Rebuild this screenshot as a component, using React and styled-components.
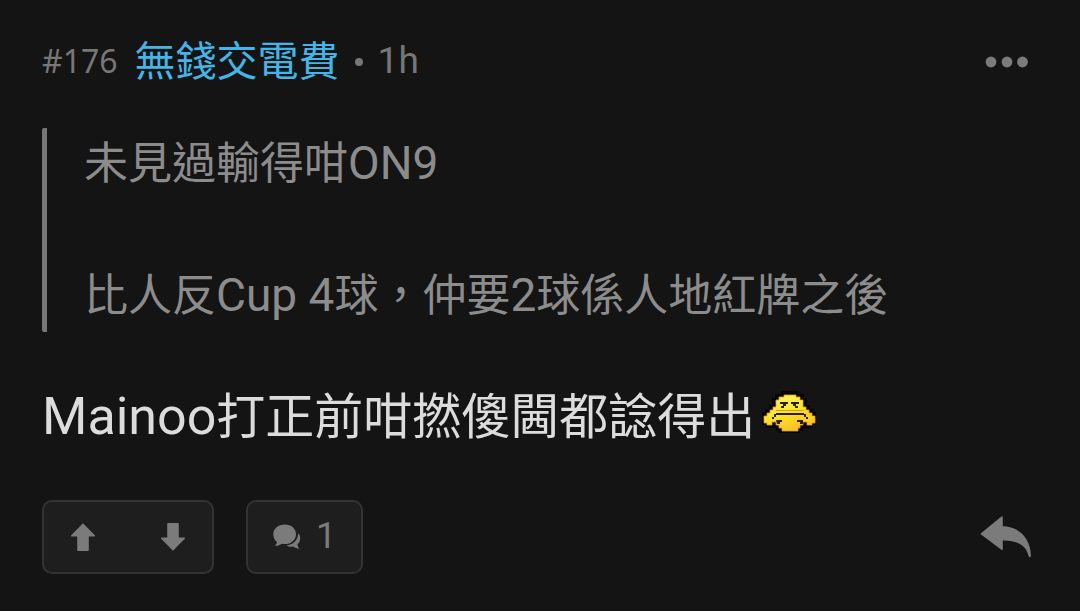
import styled, { createGlobalStyle } from "styled-components";

const App = () => {
  return (
    <>
      <GlobalStyle />
      <Post>
        <Header>
          <Floor>#176</Floor>
          <Author href="#author">無錢交電費</Author>
          <Dot />
          <Time>1h</Time>
          <MoreButton type="button" aria-label="More">
            <MoreIcon />
          </MoreButton>
        </Header>
        <Quote>
          <p>
            未見過輸得咁<QuoteLatin>ON9</QuoteLatin>
          </p>
          <p>
            <br />
          </p>
          <p>
            比人反<QuoteLatin>Cup 4</QuoteLatin>球，仲要<QuoteLatin>2</QuoteLatin>
            球係人地紅牌之後
          </p>
        </Quote>
        <Content>
          <ContentLatin>Mainoo</ContentLatin>打正前咁撚傻閪都諗得出
          <SadFace />
        </Content>
        <Footer>
          <VoteBox>
            <VoteButton type="button" aria-label="Upvote">
              <ArrowIcon />
            </VoteButton>
            <VoteButton type="button" aria-label="Downvote">
              <ArrowIcon $down />
            </VoteButton>
          </VoteBox>
          <CommentButton type="button" aria-label="1 comment">
            <CommentsIcon />
            <span>1</span>
          </CommentButton>
          <ReplyButton type="button" aria-label="Reply">
            <ReplyIcon />
          </ReplyButton>
        </Footer>
      </Post>
    </>
  );
};

export default App;

const MoreIcon = () => (
  <svg width="44" height="12" viewBox="0 0 44 12" fill="currentColor">
    <circle cx="6" cy="6" r="5.4" />
    <circle cx="22" cy="6" r="5.4" />
    <circle cx="37.5" cy="6" r="5.4" />
  </svg>
);

const ArrowIcon = ({ $down }) => (
  <ArrowSvg $down={$down} width="26" height="28" viewBox="0 0 26 28">
    <path
      d="M13 .2 24.8 12.200Q25.600 13.400 24.200 13.400H18.800V27.200Q18.800 28 18 28H8Q7.200 28 7.200 27.200V13.400H1.800Q.4 13.400 1.200 12.200Z"
      fill="currentColor"
    />
  </ArrowSvg>
);

const CommentsIcon = () => (
  <svg width="28" height="26" viewBox="0 0 28 26" fill="currentColor">
    <path d="M11.800.5C18.200.5 23 4.600 23 10.200s-4.800 9.900-11.200 9.900c-1.100 0-2.100-.1-3-.3C6.900 21.200 4.500 22 1.600 21.800c1.500-1.200 2.200-2.400 2.300-3.900C1.600 16.100.3 13.400.3 10.200.3 4.600 5.400.5 11.800.5Z" />
    <path d="M25.200 9.300c1.300 1.400 2 3.100 2 5 0 2.400-1 4.500-2.700 6 .1 1.800.8 3.200 2.200 4.400-2.500.1-4.600-.6-6.300-2.100-2.600.5-5.100.1-7-1.200 6.500-.4 11.700-5 11.800-12.100Z" />
  </svg>
);

const ReplyIcon = () => (
  <svg width="52" height="42" viewBox="0 0 52 42" fill="currentColor">
    <path d="M1 17.200 21.400.6Q22.800-.2 22.800 1.400V10.300C39 10.600 50.500 22 50.900 39.500Q51 41.500 49.400 41.200L48.500 40C46.500 29.500 37 24 22.800 24.500V33Q22.800 34.700 21.400 33.700L1 18.600Q.2 17.900 1 17.200Z" />
  </svg>
);

const SadFace = () => (
  <FaceSvg viewBox="0 0 54 44" role="img" aria-label="sad">
    <defs>
      <linearGradient id="skin" x1="0.35" y1="0" x2="0.75" y2="1">
        <stop offset="0" stopColor="#fff35c" />
        <stop offset="0.5" stopColor="#fde02a" />
        <stop offset="1" stopColor="#f6b92c" />
      </linearGradient>
    </defs>
    <path
      d="M19 2h18v3h5v4h3v7h3v4h3v3h3v13h-3v3H41v3h-3v2H17v-2h-3v-3H4v-3H0V23h3v-3h4v-4h3V9h3V5h6Z"
      fill="#060606"
    />
    <path
      d="M22 6h12v2h4v3h3v7h3v3h3v3h3v3h3v7h-3v2h-5v-3h-4v3h-3v3h-2v3H20v-3h-3v-3h-3v-3h-4v3H5v-2H2v-7h3v-3h3v-3h3v-3h3v-7h3V8h5Z"
      fill="url(#skin)"
      stroke="#e39a2c"
      strokeWidth="0.8"
    />
    <path
      d="M18 13h8v2h-2v2h-2v2h-3v-2h2v-2h-3ZM29 13h8v2h-3v2h2v2h-3v-2h-2v-2h-2ZM14 24h28v2H14ZM12 25h2v3h-2ZM42 25h2v3h-2ZM10 28h2v2h-2ZM44 28h2v2h-2ZM14 31h6v2h-2v2h-3ZM35 31h6v4h-3v-2h-3Z"
      fill="#2a2100"
    />
    <path d="M14 21h28v1H14Z" fill="#c9a21c" />
  </FaceSvg>
);

// styled components
const GlobalStyle = createGlobalStyle`
  * {
    box-sizing: border-box;
  }

  body {
    margin: 0;
    background: #141414;
    font-family: Roboto, "Noto Sans CJK TC", sans-serif;
  }

  p {
    margin: 0;
  }

  button {
    display: flex;
    align-items: center;
    justify-content: center;
    margin: 0;
    padding: 0;
    border: none;
    background: none;
    color: #7b7b7b;
    font-family: inherit;
    cursor: pointer;
  }
`;

const Post = styled.article`
  padding: 28px 48px 36px 42px;
`;

const Header = styled.header`
  display: flex;
  align-items: center;
  height: 68px;
  color: #777;
`;

const Floor = styled.span`
  margin-right: 17px;
  padding-bottom: 4px;
  font-family: "Noto Sans", sans-serif;
  font-size: 32px;
`;

const Author = styled.a`
  color: #45b4e6;
  font-size: 41px;
  line-height: 64px;
  text-decoration: none;
`;

const Dot = styled.span`
  width: 8px;
  height: 8px;
  margin: 0 15px;
  border-radius: 50%;
  background: #777;
`;

const Time = styled.time`
  padding-bottom: 4px;
  font-size: 37px;
`;

const MoreButton = styled.button`
  height: 44px;
  margin: 0 3px 0 auto;
`;

const Quote = styled.blockquote`
  margin: 32px 0 0;
  padding: 3px 0 3px 37px;
  border-left: 5px solid #777;
  border-radius: 2px;
  color: #8c8c8c;
  font-size: 44px;
  line-height: 66px;
`;

const QuoteLatin = styled.span`
  font-size: 46px;
  line-height: 1;
`;

const Content = styled.p`
  margin-top: 48px;
  color: #dcdcdc;
  font-size: 49px;
  line-height: 76px;
`;

const ContentLatin = styled.span`
  font-size: 52px;
  line-height: 1;
`;

const FaceSvg = styled.svg`
  width: 54px;
  height: 44px;
  margin-left: 7px;
  vertical-align: 1px;
`;

const Footer = styled.footer`
  display: flex;
  align-items: center;
  gap: 32px;
  margin-top: 44px;
`;

const Box = styled.div`
  display: flex;
  height: 74px;
  border: 2px solid #333;
  border-radius: 10px;
  background: #1e1e1e;
`;

const VoteBox = styled(Box)`
  gap: 12px;
`;

const VoteButton = styled.button`
  width: 78px;
`;

const ArrowSvg = styled.svg`
  transform: ${({ $down }) => ($down ? "rotate(180deg)" : "none")};
`;

const CommentButton = styled(Box).attrs({ as: "button" })`
  gap: 15px;
  padding: 0 25px;
  font-size: 36px;

  span {
    padding-bottom: 2px;
  }
`;

const ReplyButton = styled.button`
  height: 74px;
  margin-left: auto;
`;
